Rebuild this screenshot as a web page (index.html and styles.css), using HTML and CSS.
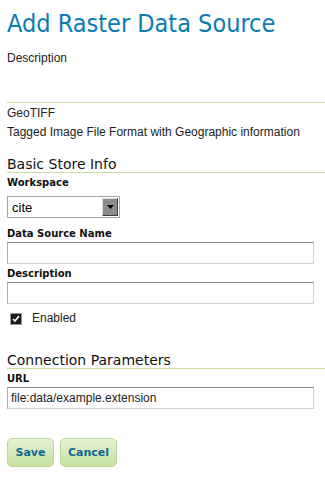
FILE: index.html
```html
<!DOCTYPE html>
<html lang="en">
<head>
    <meta charset="UTF-8">
    <title>Add Raster Data Source</title>
    <link rel="stylesheet" href="styles.css">
</head>
<body>

    <div class="page">
        <h1 class="page-title">Add Raster Data Source</h1>
        <p class="page-desc">Description</p>

        <div class="store-type">
            <p>GeoTIFF</p>
            <p>Tagged Image File Format with Geographic information</p>
        </div>

        <form class="store-form">
            <h2 class="section-title">Basic Store Info</h2>

            <div class="field">
                <label for="workspace">Workspace</label>
                <div class="select-box" id="workspace">
                    <span class="select-value">cite</span>
                    <span class="select-btn">
                        <svg width="7" height="4" viewBox="0 0 7 4"><path d="M0 0h7L3.5 4z" fill="#000"/></svg>
                    </span>
                </div>
            </div>

            <div class="field">
                <label for="name">Data Source Name</label>
                <input type="text" id="name" class="text-input">
            </div>

            <div class="field">
                <label for="desc">Description</label>
                <input type="text" id="desc" class="text-input">
            </div>

            <div class="check-row">
                <span class="check-box">
                    <svg width="8" height="8" viewBox="0 0 8 8"><path d="M1 4l2 2 4-5" stroke="#fff" stroke-width="1.6" fill="none"/></svg>
                </span>
                <span>Enabled</span>
            </div>

            <h2 class="section-title conn">Connection Parameters</h2>

            <div class="field">
                <label for="url">URL</label>
                <input type="text" id="url" class="text-input" value="file:data/example.extension">
            </div>

            <div class="buttons">
                <button type="button" class="btn btn-save">Save</button>
                <button type="button" class="btn btn-cancel">Cancel</button>
            </div>
        </form>
    </div>

</body>
</html>
```

FILE: styles.css
```css
* {
    margin: 0;
    padding: 0;
    box-sizing: border-box;
}
body {
    font-family: 'Liberation Sans', Arial, sans-serif;
    font-size: 12px;
    color: #222;
    background-color: #fff;
}
.page {
    padding-left: 7px;
}
.page-title {
    font-family: 'DejaVu Sans Condensed', 'DejaVu Sans', sans-serif;
    font-weight: normal;
    font-size: 25px;
    line-height: 30px;
    color: #0a7cb2;
    padding-top: 9px;
}
.page-desc {
    margin-top: 11px;
    line-height: 16px;
}
.store-type {
    margin-top: 36px;
    border-top: 1px solid #c7e09f;
    padding-top: 1px;
}
.store-type p {
    line-height: 19px;
}
.section-title {
    font-family: 'DejaVu Sans', Verdana, sans-serif;
    font-weight: normal;
    font-size: 14px;
    line-height: 16px;
    color: #111;
    margin-top: 14px;
    border-bottom: 1px solid #c7e09f;
}
.section-title.conn {
    margin-top: 27px;
}
.field {
    margin-top: 3px;
}
.field label {
    display: block;
    font-family: 'DejaVu Sans', Verdana, sans-serif;
    font-weight: bold;
    font-size: 10px;
    line-height: 14px;
    color: #111;
    margin-bottom: 1px;
}
.text-input {
    display: block;
    width: 307px;
    height: 22px;
    border: 1px solid #d0d0d0;
    border-top-color: #8a8a8a;
    border-left-color: #b0b0b0;
    font-family: 'Liberation Sans', Arial, sans-serif;
    font-size: 12px;
    padding: 0 3px;
    color: #222;
    outline: none;
}
.select-box {
    display: flex;
    align-items: center;
    width: 113px;
    height: 22px;
    margin-top: 6px;
    margin-bottom: 9px;
    border: 1px solid #a5a5a5;
    padding: 1px;
}
.select-value {
    flex: 1;
    padding-left: 3px;
    font-size: 13px;
    color: #000;
}
.select-btn {
    width: 16px;
    height: 18px;
    background-color: #8c8c8c;
    border: 1px solid;
    border-color: #dcdcdc #3c3c3c #3c3c3c #dcdcdc;
    display: flex;
    align-items: center;
    justify-content: center;
}
.check-row {
    display: flex;
    align-items: center;
    gap: 10px;
    height: 13px;
    margin-top: 8px;
    padding-left: 3px;
    line-height: 13px;
}
.check-box {
    width: 12px;
    height: 12px;
    background-color: #1a1a1a;
    border: 1px solid #9a9a9a;
    display: flex;
    align-items: center;
    justify-content: center;
}
.buttons {
    display: flex;
    gap: 6px;
    margin-top: 29px;
}
.btn {
    height: 29px;
    border: 1px solid #bcd896;
    border-radius: 5px;
    background: linear-gradient(#e6f2d4, #c6e0a0);
    font-family: 'DejaVu Sans', Verdana, sans-serif;
    font-weight: bold;
    font-size: 11px;
    color: #0e6896;
}
.btn-save {
    width: 47px;
}
.btn-cancel {
    width: 57px;
}
```
